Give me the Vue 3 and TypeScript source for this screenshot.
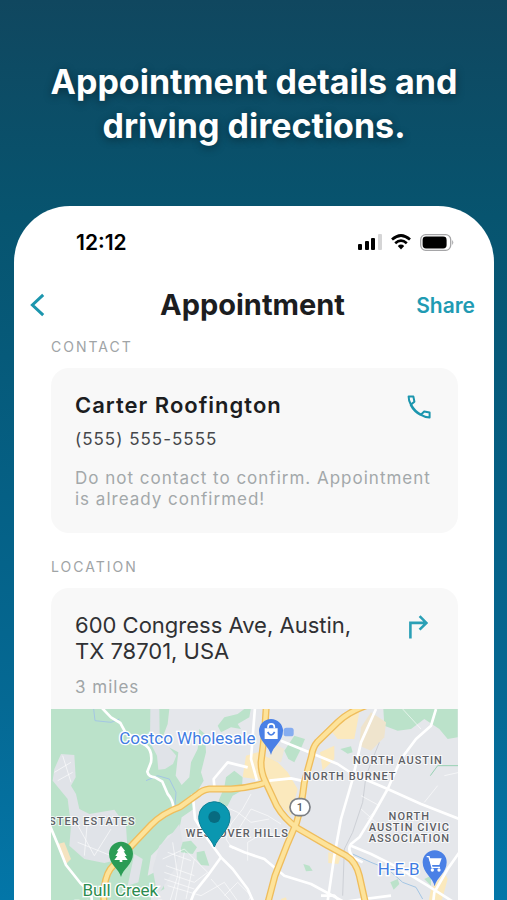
<script setup lang="ts">
interface Contact {
  name: string
  phone: string
  note: string
}

interface Block {
  x: number
  y: number
  lines: string[]
}

const contact: Contact = {
  name: 'Carter Roofington',
  phone: '(555) 555-5555',
  note: 'Do not contact to confirm. Appointment is already confirmed!',
}

const address = '600 Congress Ave, Austin, TX 78701, USA'
const distance = '3 miles'

const districts: Block[] = [
  { x: 124, y: 347, lines: ['STER ESTATES'] },
  { x: 559, y: 383, lines: ['WESTOVER HILLS'] },
  { x: 1041, y: 165, lines: ['NORTH AUSTIN'] },
  { x: 897, y: 214, lines: ['NORTH BURNET'] },
  { x: 1075, y: 333, lines: ['NORTH', 'AUSTIN CIVIC', 'ASSOCIATION'] },
]

const highways: string[] = [
  'M165 720 L158 560 Q160 505 178 480 L215 438 L300 348 Q335 312 387 294 L440 256 Q455 242 475 240 L540 240 Q590 238 640 222',
  'M646 -10 L640 80 L630 160 Q630 190 642 215 L677 290 Q700 330 740 358 L830 410 L885 440 Q915 458 925 500 L942 576 L955 720',
  'M945 -10 Q890 10 860 40 L800 98 Q785 115 782 140 L760 220 Q752 290 737 340 L707 410 L672 500 L652 576 L628 720',
]

const roads: string[] = [
  'M152 -4 L180 25 L208 42 L222 68 L285 110 Q305 125 300 160 L289 188 Q292 203 312 205 L334 218 L350 255 Q368 275 367 300',
  'M-4 348 L22 410 L45 468 L88 522 L120 552 L130 640',
  'M612 -4 L606 70 L600 150 L618 215',
  'M690 95 L760 124 L860 165 L905 195 L1010 240 L1110 285 L1225 330',
  'M975 0 L930 100 L905 210 L870 330 L850 440 L830 576 L810 720',
  'M1155 0 L1140 50 L1095 90 L1050 150 L1010 240 L965 320 L925 385 L900 405 Q888 420 905 445 L935 460',
  'M900 410 L960 435 L1040 475 L1130 530 L1225 590',
  'M1225 430 L1190 480 L1150 550 L1130 720',
  'M655 215 L720 208 L765 218',
  'M425 255 L432 330 L470 390 L510 445 L545 480 L590 540 L612 590 L640 720',
  'M510 445 L470 500 L430 550 L410 600',
  'M535 410 L580 430 L640 450 L700 500 L780 525 L900 590',
  'M490 232 L488 210 L530 160 L590 175',
  'M810 560 L850 560 L870 580 L940 570 L1020 560',
]

const lanes: string[] = [
  'M515 290 L560 310 L600 340 L655 330',
  'M600 255 L575 300 L540 345 L525 390 L545 420',
  'M560 365 L600 300 L650 320 L690 345',
  'M590 455 L590 400 L640 370 L690 380',
  'M335 450 L400 420 L470 490 L430 520 L340 490',
  'M350 530 L450 560 L520 520 L570 590',
  'M365 400 L380 500 L350 600 M400 430 L370 590 M430 450 L405 570',
  'M345 470 L430 500 M340 510 L430 540 M350 430 L420 455',
  'M520 560 L560 520 L600 560 L570 620 M480 510 L560 600',
  'M70 330 L130 440 L180 360 M80 400 L180 440 M110 330 L100 440',
  'M10 190 L60 160 M20 215 L65 190 M35 140 L60 220',
  'M930 260 L985 290 L950 330 M930 300 L975 340',
  'M1055 0 L1110 60 M1160 230 L1120 280 M1180 200 L1225 190',
]
</script>

<template>
  <main class="page">
    <h1 class="headline">Appointment details and<br />driving directions.</h1>

    <section class="phone">
      <div class="status">
        <span class="time">12:12</span>
        <div class="indicators">
          <svg width="24" height="16" viewBox="0 0 24 16" aria-hidden="true">
            <rect x="0" y="10" width="4" height="6" rx="1" />
            <rect x="7" y="7" width="4" height="9" rx="1" />
            <rect x="13" y="4" width="4" height="12" rx="1" />
            <rect x="20" y="0" width="4" height="16" rx="1" fill="#d5d5d6" />
          </svg>
          <svg width="20" height="16" viewBox="0 0 20 16" aria-hidden="true">
            <g fill="none" stroke="#000" stroke-width="2.7">
              <path d="M1 5.6 Q10 -2.6 19 5.6" />
              <path d="M4.2 9.2 Q10 4.2 15.8 9.2" />
            </g>
            <path d="M6.8 12 Q10 9.2 13.2 12 L10 15.4Z" />
          </svg>
          <svg width="34" height="17" viewBox="0 0 34 17" aria-hidden="true">
            <rect x="0.7" y="0.7" width="30" height="15.6" rx="5" fill="none" stroke="#a5a5a7" stroke-width="1.3" />
            <rect x="2.6" y="2.6" width="24" height="11.8" rx="3.4" />
            <path d="M32.2 6 Q34.4 8.5 32.2 11Z" fill="#a5a5a7" />
          </svg>
        </div>
      </div>

      <header class="bar">
        <button class="back" type="button" aria-label="Back">
          <svg width="16" height="24" viewBox="0 0 16 24" aria-hidden="true">
            <path d="M13.2 1.8 L2.4 12 L13.2 22.2" fill="none" stroke="#1c96ae" stroke-width="3" />
          </svg>
        </button>
        <h2 class="title">Appointment</h2>
        <button class="share" type="button">Share</button>
      </header>

      <div class="content">
        <h3 class="label">CONTACT</h3>
        <article class="card contact">
          <div class="row">
            <div>
              <p class="name">{{ contact.name }}</p>
              <p class="number">{{ contact.phone }}</p>
            </div>
            <a class="action" href="tel:5555555555" aria-label="Call">
              <svg width="24" height="24" viewBox="0 0 24 24" aria-hidden="true">
                <g fill="none" stroke="#1c96ae" stroke-width="2" stroke-linejoin="round">
                  <path d="M1.6 1.6 H6.4 L7.4 6.8 L3.8 9.6 Q1.6 5.6 1.6 1.6Z" />
                  <path d="M22.6 22.4 V17.6 L17.2 16.4 L14 19.8 Q18 22.4 22.6 22.4Z" />
                  <path d="M3.8 9.6 Q7.4 16.6 14 19.8" stroke-width="2.6" />
                </g>
              </svg>
            </a>
          </div>
          <p class="note">{{ contact.note }}</p>
        </article>

        <h3 class="label">LOCATION</h3>
        <article class="card">
          <div class="place">
            <div class="row">
              <p class="address">{{ address }}</p>
              <a class="action" href="#directions" aria-label="Directions">
                <svg width="24" height="24" viewBox="0 0 24 24" aria-hidden="true">
                  <path d="M3.4 23.4 V7.9 H19.6 M12.6 1.1 L19.4 7.9 L12.6 14.7" fill="none" stroke="#2ba0b6" stroke-width="2.6" />
                </svg>
              </a>
            </div>
            <p class="distance">{{ distance }}</p>
          </div>

          <svg class="map" viewBox="0 0 1221 720" role="img" aria-label="Map">
            <rect width="1221" height="720" fill="#e5e7eb" />

            <g fill="#bbe2ca">
              <path d="M0 0 H355 L350 45 L335 85 L345 110 L382 130 L374 200 L392 228 L415 205 L420 160 L440 120 L445 60 L462 75 L465 130 L450 190 L458 215 L430 262 L428 300 L392 325 L385 360 L350 380 L320 420 L300 440 L290 500 L330 480 L340 540 L300 560 L290 720 H0Z" />
              <path d="M500 50 L520 25 L560 15 L580 0 L600 -4 L595 25 L560 45 L570 60 L540 55 L510 70Z" />
              <path d="M520 235 L525 205 L550 185 L575 205 L572 245 L545 260 L530 290 L490 310 L505 270Z" />
              <path d="M388 400 L420 395 L438 415 L425 435 L390 430Z" />
              <path d="M437 430 L460 425 L475 470 L450 468 L437 450Z" />
              <path d="M700 125 L730 80 L762 90 L745 130 L730 160 L712 150Z" />
              <path d="M997 0 H1220 V85 L1190 90 L1165 60 L1120 30 L1080 60 L1040 65 L1000 50Z" />
              <path d="M868 120 L900 112 L905 130 L890 134Z" />
              <path d="M757 465 L775 470 L785 485 L765 487Z" />
              <path d="M1018 520 L1040 510 L1045 525 L1028 542Z" />
              <path d="M1120 510 L1140 500 L1140 530Z" />
            </g>

            <g fill="#e0e3e8">
              <path d="M298 0 H325 L326 90 L350 110 L376 140 L366 165 L342 180 L322 182 L318 140 L297 100Z" />
              <path d="M30 135 L70 138 L74 205 L60 230 L75 255 L85 300 L115 315 L190 302 L225 350 L230 430 L210 450 L160 462 L100 450 L55 410 L60 350 L50 270 L5 215 L10 180Z" />
              <path d="M385 345 L395 400 L370 480 L320 560 L305 480 L325 410 L355 385Z" />
              <path d="M250 435 L275 450 L262 520 L230 530Z" />
            </g>

            <g fill="#fbe9bd">
              <path d="M585 140 L620 130 L680 160 L710 190 L740 240 L720 320 L690 290 L650 215 L575 205Z" />
              <path d="M660 100 L700 120 L690 160 L655 150Z" opacity="0.5" />
              <path d="M840 65 L880 10 L925 10 L910 90 L860 90Z" />
              <path d="M807 130 L850 110 L850 150 L815 185Z" />
              <path d="M930 55 L960 10 L1005 40 L1000 85 L960 125 L925 110Z" fill="#efe4cd" />
              <path d="M832 430 L870 440 L862 465 L832 462Z" />
              <path d="M1140 540 L1180 490 L1190 510 L1165 600 L1130 590Z" />
              <path d="M20 405 L40 400 L60 450 L45 465Z" fill="#f5e3c0" />
              <path d="M690 570 L705 565 L712 590 L690 590Z" />
            </g>

            <g fill="none" stroke="#a4c6e4" stroke-width="3">
              <path d="M128 0 L132 35 L180 40 L205 30" />
              <path d="M285 215 L320 200 L355 210 L375 250 L372 290" />
              <path d="M905 435 L960 460 L1010 480 L1055 520 L1095 535 L1115 570" />
            </g>
            <path d="M985 100 L945 200 L935 280 L905 370 L880 420 L875 560" fill="none" stroke="#cdd0d6" stroke-width="3" />
            <path d="M1138 200 L1160 170 L1225 170" fill="none" stroke="#97d2b3" stroke-width="3" />
            <rect x="698" y="56" width="30" height="26" rx="8" fill="#86adf0" />

            <g class="lanes"><path v-for="d in lanes" :key="d" :d="d" /></g>
            <g class="roads"><path v-for="d in roads" :key="d" :d="d" /></g>
            <g class="edges"><path v-for="d in highways" :key="d" :d="d" /></g>
            <g class="highways"><path v-for="d in highways" :key="d" :d="d" /></g>

            <rect x="717" y="269" width="60" height="51" rx="25" fill="#fff" stroke="#7b7f85" stroke-width="5" />
            <text class="shield" x="747" y="306">1</text>

            <g class="district">
              <text v-for="item in districts" :key="item.lines[0] + item.x" :x="item.x" :y="item.y">
                <tspan v-for="(line, i) in item.lines" :key="line" :x="item.x" :dy="i ? 33 : 0">{{ line }}</tspan>
              </text>
            </g>

            <text class="poi" x="409" y="104">Costco Wholesale</text>
            <text class="poi" x="1043" y="498">H-E-B</text>
            <text class="poi park" x="208" y="560">Bull Creek</text>
            <text class="poi park" x="208" y="611">District Park</text>

            <path d="M660 138 C655 112 624 98 624 66 A36 36 0 0 1 696 66 C696 98 665 112 660 138Z" fill="#4a80e6" />
            <path d="M641 58 H680 V90 H641Z" fill="#fff" />
            <path d="M651 58 V54 A9 9 0 0 1 670 54 V58" fill="none" stroke="#fff" stroke-width="5" />
            <path d="M650 69 Q660 87 671 69" fill="none" stroke="#4a80e6" stroke-width="5" />

            <path d="M210 504 C205 480 174 466 174 434 A36 36 0 0 1 246 434 C246 466 215 480 210 504Z" fill="#2b9c55" />
            <path d="M210 410 L223 427 H218 L227 441 H221 L230 453 H214 V459 H206 V453 H190 L199 441 H193 L202 427 H197Z" fill="#fff" />

            <path d="M1151 532 C1146 506 1115 492 1115 460 A36 36 0 0 1 1187 460 C1187 492 1156 506 1151 532Z" fill="#4a80e6" />
            <path d="M1133 448 H1172 L1165 468 H1141Z" fill="#fff" />
            <path d="M1127 443 H1134 L1143 475 H1167" fill="none" stroke="#fff" stroke-width="4" />
            <circle cx="1144" cy="483" r="5" fill="#fff" />
            <circle cx="1164" cy="483" r="5" fill="#fff" />

            <path d="M490 414 C480 385 443 363 443 325 A47 47 0 0 1 537 325 C537 363 500 385 490 414Z" fill="#0a97b0" stroke="#0c7f95" stroke-width="3" />
            <circle cx="490" cy="324" r="18" fill="#086b80" />
          </svg>
        </article>
      </div>
    </section>
  </main>
</template>

<style>
body {
  margin: 0;
}
</style>

<style scoped>
.page {
  box-sizing: border-box;
  height: 100vh;
  overflow: hidden;
  padding: 60px 13px 0 14px;
  background: linear-gradient(#10475f 0%, #07546f 24%, #056085 55%, #056994 78%, #0376a8 100%);
  font-family: Inter, 'Liberation Sans', sans-serif;
  color: #1c1d1f;
}

h1,
h2,
h3,
p {
  margin: 0;
}

.headline {
  height: 146px;
  font-size: 34px;
  font-weight: 700;
  line-height: 44px;
  text-align: center;
  color: #fff;
  text-shadow: 0 2px 8px rgba(0, 0, 0, 0.4);
}

.phone {
  padding-top: 24px;
  border-radius: 56px 56px 0 0;
  background: #fff;
}

.status {
  display: flex;
  align-items: center;
  justify-content: space-between;
  padding: 0 40px 0 62px;
  height: 24px;
}

.time {
  font-size: 21px;
  font-weight: 600;
  color: #000;
}

.indicators {
  display: flex;
  align-items: center;
  gap: 9px;
}

.bar {
  display: grid;
  grid-template-columns: 1fr auto 1fr;
  align-items: center;
  height: 40px;
  margin-top: 31px;
  padding: 0 19px 0 16px;
}

.back,
.share {
  padding: 0;
  border: 0;
  background: none;
  font: inherit;
  cursor: pointer;
}

.back {
  display: flex;
  justify-self: start;
}

.title {
  font-size: 29px;
  font-weight: 700;
  line-height: 40px;
}

.share {
  justify-self: end;
  font-size: 21px;
  font-weight: 600;
  color: #1f9bb3;
}

.content {
  padding: 5px 36px 0 37px;
}

.label {
  padding: 8px 0 13px;
  font-size: 14px;
  font-weight: 400;
  line-height: 17px;
  letter-spacing: 2px;
  color: #a0a4a6;
}

.card {
  overflow: hidden;
  border-radius: 18px;
  background: #f8f8f8;
}

.contact {
  margin-bottom: 17px;
  padding: 24px 24px 23px;
}

.row {
  display: flex;
  justify-content: space-between;
}

.action {
  display: flex;
  align-self: flex-start;
  padding: 3px 3px 0 0;
}

.name {
  font-size: 22px;
  font-weight: 600;
  line-height: 26px;
  letter-spacing: 1px;
}

.number {
  margin-top: 8px;
  font-size: 17px;
  line-height: 26px;
  letter-spacing: 1px;
  color: #45474a;
}

.note {
  margin-top: 16px;
  font-size: 17px;
  line-height: 21px;
  letter-spacing: 1px;
  color: #a3a8aa;
}

.place {
  padding: 24px 24px 10px;
}

.address {
  max-width: 290px;
  font-size: 22px;
  line-height: 26px;
  color: #303134;
}

.distance {
  margin-top: 11px;
  font-size: 17px;
  line-height: 24px;
  letter-spacing: 1px;
  color: #a0a5a7;
}

.map {
  display: block;
  width: 100%;
  font-family: Roboto, sans-serif;
  text-anchor: middle;
}

.lanes,
.roads,
.edges,
.highways {
  fill: none;
  stroke: #fff;
  stroke-linejoin: round;
}

.lanes {
  stroke-width: 3;
  stroke-opacity: 0.6;
}

.roads {
  stroke-width: 8;
}

.edges {
  stroke: #efbd5c;
  stroke-width: 21;
}

.highways {
  stroke: #fde39a;
  stroke-width: 13;
}

.shield {
  font-size: 33px;
  font-weight: 500;
  fill: #55585d;
}

.district {
  font-size: 33px;
  font-weight: 500;
  letter-spacing: 3px;
  fill: #5d6065;
  stroke: #fff;
  stroke-width: 6;
  stroke-opacity: 0.8;
  paint-order: stroke;
}

.poi {
  font-size: 51px;
  fill: #3f7ce2;
  stroke: #fff;
  stroke-width: 8;
  paint-order: stroke;
}

.park {
  fill: #2c8c50;
}
</style>
